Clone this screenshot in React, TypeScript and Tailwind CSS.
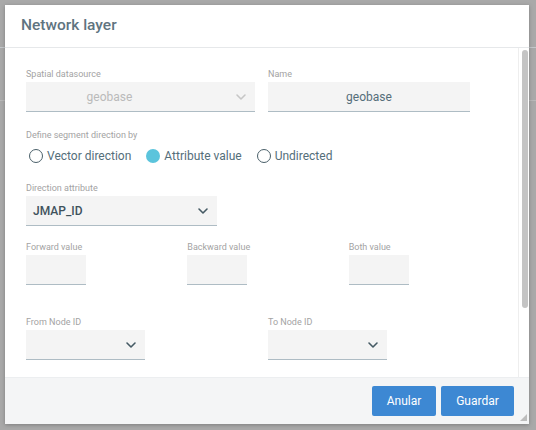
import { ChevronDown } from "lucide-react";

const font = { fontFamily: "Roboto, 'Noto Sans', sans-serif" };

function Label({ children }: { children: string }) {
  return <p className="h-[13px] text-[9px] leading-[11px] text-[#a3a3a3]">{children}</p>;
}

function SelectBox({
  value,
  width,
  disabled,
  textClass = "",
}: {
  value?: string;
  width: string;
  disabled?: boolean;
  textClass?: string;
}) {
  return (
    <div
      className={`flex h-[30px] items-center border-b-[1.5px] border-[#aebcc4] bg-[#f4f4f4] pl-[7px] pr-[6px] ${width}`}
    >
      <span
        className={`flex-1 text-[12px] ${textClass} ${
          disabled ? "text-[#bababa]" : "font-medium text-[#3f525c]"
        }`}
      >
        {value}
      </span>
      <ChevronDown
        size={16}
        strokeWidth={2.4}
        className={disabled ? "text-[#c6c6c6]" : "text-[#455a64]"}
      />
    </div>
  );
}

function TextBox({ value, width }: { value?: string; width: string }) {
  return (
    <div
      className={`flex h-[30px] items-center justify-center border-b-[1.5px] border-[#aebcc4] bg-[#f4f4f4] text-[12px] text-[#546e7a] ${width}`}
    >
      {value}
    </div>
  );
}

function Radio({ label, checked }: { label: string; checked?: boolean }) {
  return (
    <label className="flex items-center gap-[4px] text-[12px] leading-[16px] text-[#546e7a]">
      {checked ? (
        <span className="h-[14px] w-[14px] rounded-full bg-[#5bc4dc]" />
      ) : (
        <span className="h-[14px] w-[14px] rounded-full border-[1.5px] border-[#4a5f69]" />
      )}
      {label}
    </label>
  );
}

export default function App() {
  return (
    <div className="relative h-[430px] w-[536px] overflow-hidden bg-[#a9a9a9]" style={font}>
      <div className="absolute left-0 top-[47px] h-px w-full bg-[#c4c8cb]" />
      <div className="absolute left-0 top-[100px] h-px w-full bg-[#b9b9b9]" />
      <div className="absolute left-[5px] top-[5px] flex h-[419px] w-[524px] flex-col bg-white shadow-[0_1px_4px_rgba(0,0,0,0.25)]">
        <header className="flex h-[43px] shrink-0 items-center border-b border-[#e6e8ea] pl-[16px]">
          <h1 className="text-[15.5px] font-medium text-[#5f7480]">Network layer</h1>
        </header>

        <div className="flex min-h-0 flex-1">
          <div className="flex-1 overflow-hidden pl-[21px] pt-[21px]">
            <div className="flex">
              <div className="w-[242px]">
                <Label>Spatial datasource</Label>
                <SelectBox
                  value="geobase"
                  width="w-[229px]"
                  disabled
                  textClass="pr-[47px] text-center"
                />
              </div>
              <div>
                <Label>Name</Label>
                <TextBox value="geobase" width="w-[202px]" />
              </div>
            </div>

            <div className="mt-[18px]">
              <Label>Define segment direction by</Label>
              <div className="mt-[5px] flex items-center gap-[15px] pl-[3px]">
                <Radio label="Vector direction" />
                <Radio label="Attribute value" checked />
                <Radio label="Undirected" />
              </div>
            </div>

            <div className="mt-[19px]">
              <Label>Direction attribute</Label>
              <SelectBox value="JMAP_ID" width="w-[191px]" />
            </div>

            <div className="mt-[16px] grid w-[484px] grid-cols-3">
              <div>
                <Label>Forward value</Label>
                <TextBox width="w-[60px]" />
              </div>
              <div>
                <Label>Backward value</Label>
                <TextBox width="w-[60px]" />
              </div>
              <div>
                <Label>Both value</Label>
                <TextBox width="w-[60px]" />
              </div>
            </div>

            <div className="mt-[32px] flex">
              <div className="w-[242px]">
                <Label>From Node ID</Label>
                <SelectBox width="w-[119px]" />
              </div>
              <div>
                <Label>To Node ID</Label>
                <SelectBox width="w-[119px]" />
              </div>
            </div>
          </div>

          <div className="w-[11px] shrink-0 border-l border-[#eeeeee] pl-[3px] pt-[2px]">
            <div className="h-[258px] w-[6px] rounded-full bg-[#c4c4c4]" />
          </div>
        </div>

        <footer className="relative flex h-[47px] shrink-0 items-center justify-end gap-[5px] border-t border-[#eceef0] bg-[#f4f5f6] pr-[15px]">
          <button className="h-[30px] w-[64px] rounded-[2px] bg-[#3d88d3] text-[12px] text-white">
            Anular
          </button>
          <button className="h-[30px] w-[73px] rounded-[2px] bg-[#3d88d3] text-[12px] text-white">
            Guardar
          </button>
          <svg className="absolute bottom-[3px] right-[2px]" width="7" height="7" viewBox="0 0 7 7">
            <path d="M7 0 L7 7 L0 7 Z" fill="#bdbdbd" />
          </svg>
        </footer>
      </div>
    </div>
  );
}
